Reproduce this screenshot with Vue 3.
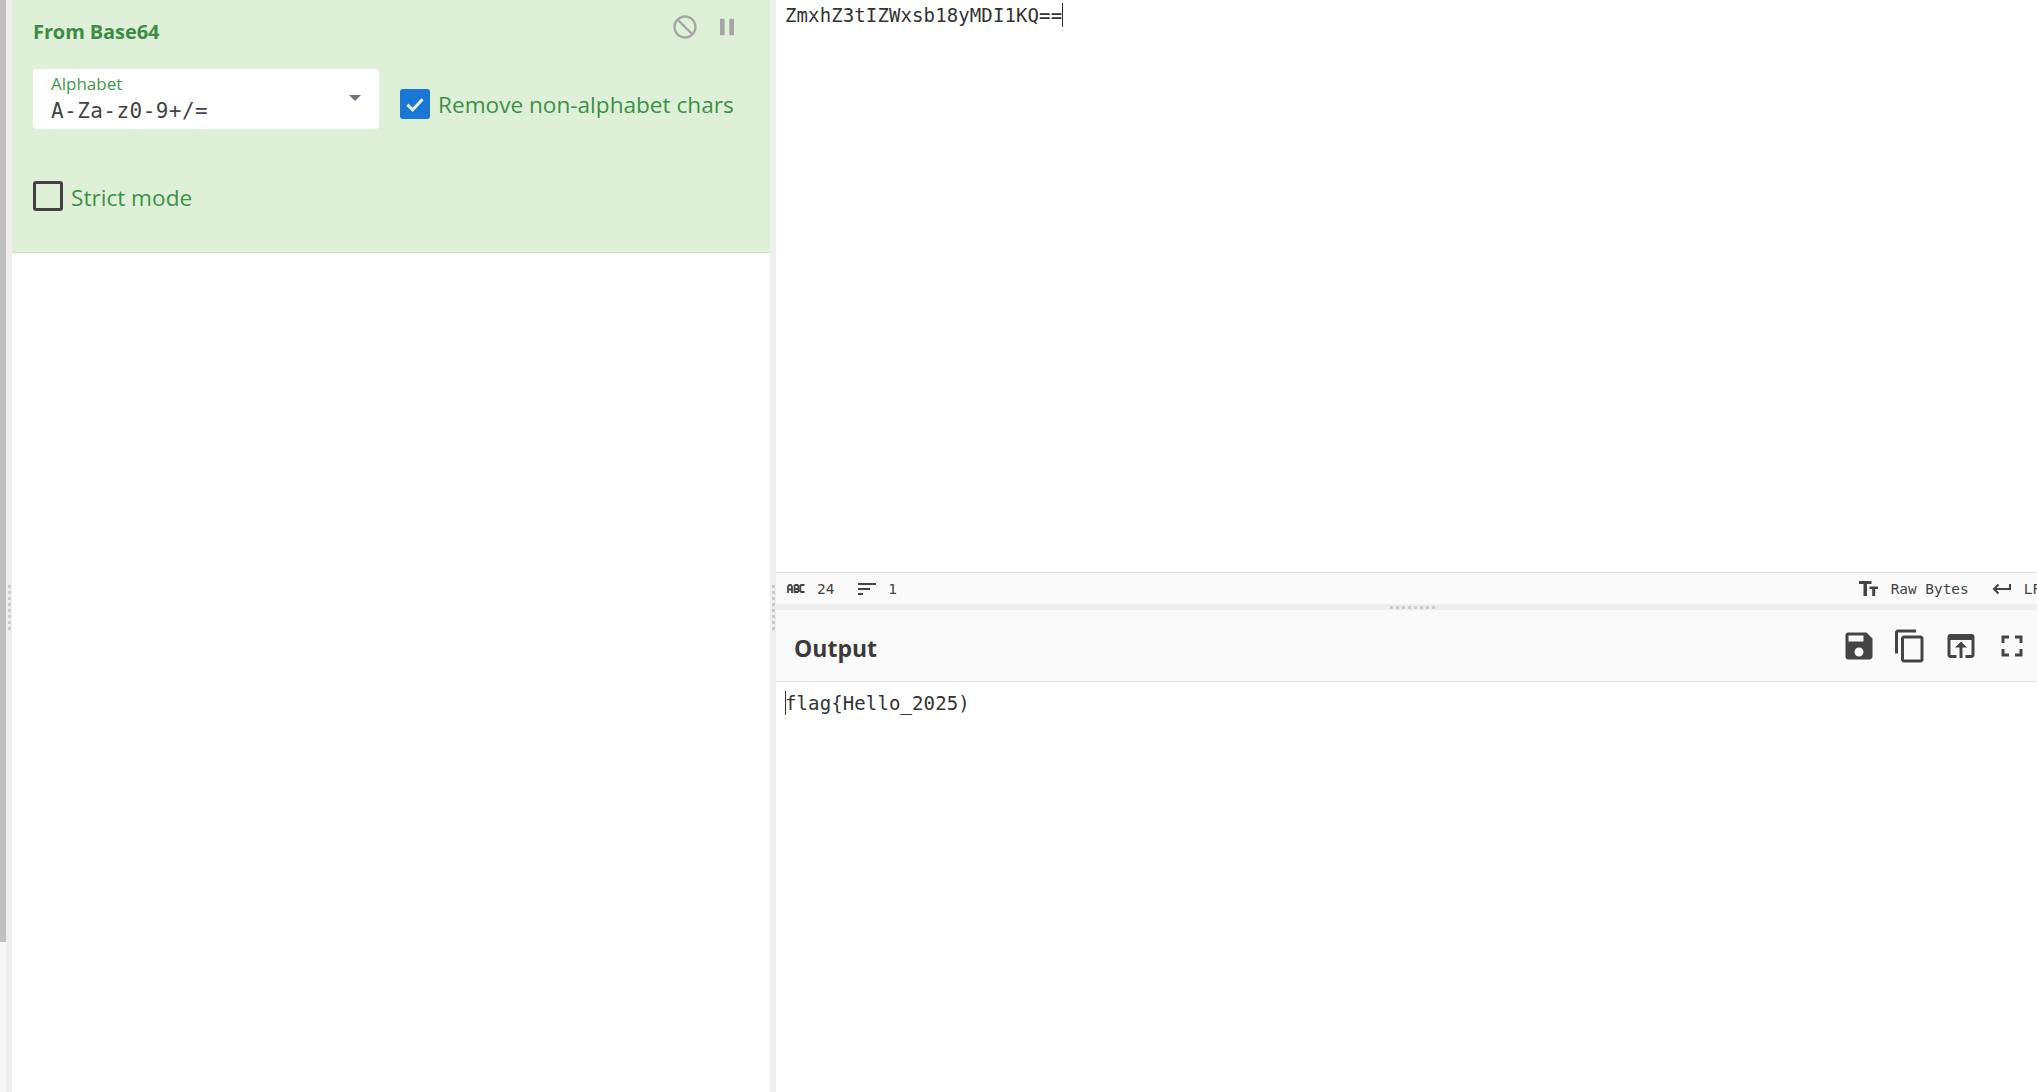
<script setup>
const title = 'From Base64'
</script>

<template>
  <div class="page">
    <div class="scrollbar"><div class="thumb"></div></div>
    <div class="gutter v"><div class="dots col"><i v-for="n in 8" :key="n"></i></div></div>
    <section class="ops">
      <div class="card">
        <div class="head">
          <h3>{{ title }}</h3>
          <div class="head-icons">
            <svg width="28" height="28" viewBox="0 0 24 24"><path fill="#a5a5a5" d="M12 2C6.48 2 2 6.48 2 12s4.480 10 10 10 10-4.480 10-10S17.520 2 12 2zM4 12c0-4.420 3.580-8 8-8 1.850 0 3.550.63 4.900 1.690L5.690 16.900A7.902 7.902 0 0 1 4 12zm8 8c-1.850 0-3.550-.63-4.900-1.690L18.310 7.100A7.902 7.902 0 0 1 20 12c0 4.420-3.580 8-8 8z" transform="scale(-1 1) translate(-24 0)"/></svg>
            <svg width="28" height="28" viewBox="0 0 24 24"><path fill="#a5a5a5" d="M6 19h4V5H6v14zm8-14v14h4V5h-4z"/></svg>
          </div>
        </div>
        <div class="row">
          <div class="select">
            <label>Alphabet</label>
            <div class="val">A-Za-z0-9+/=</div>
            <span class="caret"></span>
          </div>
          <div class="check shift">
            <span class="box on">
              <svg width="28" height="28" viewBox="0 0 24 24"><path fill="none" stroke="#e6f0fa" stroke-width="2.600" d="M5.500 12.500l4.500 4.500 8.500-9"/></svg>
            </span>
            <span class="lbl">Remove non-alphabet chars</span>
          </div>
        </div>
        <div class="check strict">
          <span class="box"></span>
          <span class="lbl low">Strict mode</span>
        </div>
      </div>
    </section>
    <div class="gutter v"><div class="dots col"><i v-for="n in 8" :key="n"></i></div></div>
    <main class="io">
      <div class="input">
        <div class="text">ZmxhZ3tIZWxsb18yMDI1KQ==<span class="cursor"></span></div>
      </div>
      <div class="status">
        <div class="group">
          <svg class="abc" width="18" height="9" viewBox="0 0 18 9"><path fill="none" stroke="#444" stroke-width="1.800" d="M1 9V2.500L2.200 1h1.600L5 2.500V9M1 5.500h4M7.500 1v7h3.200l.8-1V5.800l-.8-.8H7.500M7.500 1h3l.8.8v2.400l-.8.8M17.500 1H14.200l-.9.9v5.200l.9.9h3.300"/></svg>
          <span>24</span>
          <svg class="lines" width="18" height="12" viewBox="0 0 18 12"><path fill="#444" d="M0 0h18v2H0zM0 5h12v2H0zM0 10h5v2H0z"/></svg>
          <span>1</span>
        </div>
        <div class="group right">
          <svg width="19" height="15" viewBox="0 0 19 15"><path fill="#444" d="M0 0h12.500v3H8v12H4.500V3H0zM10.500 5.500H19v2.500h-2.800V15h-3V8h-2.700z"/></svg>
          <span class="raw">Raw Bytes</span>
          <svg class="ret" width="19" height="12" viewBox="0 0 19 12"><path fill="none" stroke="#444" stroke-width="2" d="M18 1v5H2M6.500 1.500L2 6l4.500 4.500"/></svg>
          <span>LF</span>
        </div>
      </div>
      <div class="gutter h"><div class="dots"><i v-for="n in 8" :key="n"></i></div></div>
      <div class="out-head">
        <h2>Output</h2>
        <div class="out-icons">
          <svg width="36" height="36" viewBox="0 0 24 24"><path fill="#444" d="M17 3H5a2 2 0 0 0-2 2v14a2 2 0 0 0 2 2h14c1.100 0 2-.9 2-2V7l-4-4zm-5 16c-1.660 0-3-1.340-3-3s1.340-3 3-3 3 1.340 3 3-1.340 3-3 3zm3-10H5V5h10v4z"/></svg>
          <svg width="36" height="36" viewBox="0 0 24 24"><path fill="#444" d="M16 1H4c-1.100 0-2 .9-2 2v14h2V3h12V1zm3 4H8c-1.100 0-2 .9-2 2v14c0 1.100.9 2 2 2h11c1.100 0 2-.9 2-2V7c0-1.100-.9-2-2-2zm0 16H8V7h11v14z"/></svg>
          <svg width="36" height="36" viewBox="0 0 24 24"><path fill="#444" d="M19 4H5a2 2 0 0 0-2 2v12c0 1.100.9 2 2 2h4v-2H5V8h14v10h-4v2h4c1.100 0 2-.9 2-2V6a2 2 0 0 0-2-2zm-7 5l-4 4h3v7h2v-7h3l-4-4z"/></svg>
          <svg width="36" height="36" viewBox="0 0 24 24"><path fill="#444" d="M7 14H5v5h5v-2H7v-3zm-2-4h2V7h3V5H5v5zm12 7h-3v2h5v-5h-2v3zM14 5v2h3v3h2V5h-5z"/></svg>
        </div>
      </div>
      <div class="output">
        <div class="text"><span class="cursor out"></span>flag{Hello_2025)</div>
      </div>
    </main>
  </div>
</template>

<style scoped>
.page { display: flex; width: 2037px; height: 1092px; overflow: hidden; background: #fff; font-family: "Open Sans", "Noto Sans", sans-serif; color: #333; }
.scrollbar { width: 6px; height: 100%; background: #f8f8f8; flex: none; }
.thumb { height: 942px; background: #c1c1c1; }
.gutter { background: #eee; display: flex; align-items: center; justify-content: center; flex: none; box-sizing: border-box; }
.gutter.v { width: 6px; height: 100%; padding-top: 122px; }
.gutter.h { height: 6px; width: 100%; padding-left: 12px; }
.dots { display: flex; gap: 3px; }
.dots.col { flex-direction: column; }
.dots i { width: 3px; height: 3px; background: #ccc; display: block; }
.ops { width: 758px; flex: none; background: #fff; }
.card { height: 253px; box-sizing: border-box; background: #dff0d8; border-bottom: 1px solid #cfe3bf; padding: 0 21px; color: #3c8a44; }
.head { display: flex; align-items: center; justify-content: space-between; height: 64px; }
h3 { margin: -2px 0 0; font-size: 20px; font-weight: 700; color: #3d8b45; letter-spacing: -.1px; }
.head-icons { display: flex; gap: 14px; margin-right: 8px; margin-top: -10px; }
.row { display: flex; align-items: center; gap: 21px; margin-top: 5px; }
.select { position: relative; width: 346px; height: 60px; box-sizing: border-box; background: #fff; border-radius: 4px; padding: 5px 18px; }
label { display: block; font-size: 17px; line-height: 20px; color: #3f9a4a; }
.val { font-family: "DejaVu Sans Mono", monospace; font-size: 21px; line-height: 26px; color: #444; letter-spacing: .45px; margin-top: 4px; }
.caret { position: absolute; right: 18px; top: 26px; border-left: 6px solid transparent; border-right: 6px solid transparent; border-top: 6px solid #6c757d; }
.check { display: flex; align-items: center; gap: 8px; font-size: 22.600px; color: #3c9146; }
.shift { margin-top: 10px; }
.lbl { height: 30px; line-height: 31px; }
.lbl.low { line-height: 33px; }
.box { width: 30px; height: 30px; box-sizing: border-box; border: 3px solid #424242; border-radius: 3px; display: flex; align-items: center; justify-content: center; flex: none; }
.box.on { background: #1976d2; border: none; }
.strict { margin-top: 52px; }
.io { flex: 1; min-width: 0; display: flex; flex-direction: column; }
.input { height: 573px; flex: none; box-sizing: border-box; border-bottom: 1px solid #e0e0e0; padding-top: 1px; }
.text { font-family: "DejaVu Sans Mono", monospace; font-size: 19px; line-height: 28px; letter-spacing: .11px; padding-left: 9px; color: #333; display: flex; align-items: center; }
.cursor { display: inline-block; width: 1px; height: 24px; background: #333; }
.cursor.out { margin-right: -1px; }
.status { height: 31px; flex: none; background: #fafafa; display: flex; align-items: center; justify-content: space-between; padding-left: 11px; font-family: "DejaVu Sans Mono", monospace; font-size: 14.400px; color: #444; }
.group { display: flex; align-items: center; }
.abc { margin-right: 12px; }
.lines { margin: 0 12px 0 24px; }
.right { margin-right: -4px; }
.raw { margin: 0 23px 0 13px; }
.ret { margin-right: 13px; }
.out-head { height: 72px; flex: none; box-sizing: border-box; background: #fafafa; border-bottom: 1px solid #e0e0e0; display: flex; align-items: center; justify-content: space-between; padding: 0 7px 0 18px; }
h2 { margin: 5px 0 0; font-size: 23px; font-weight: 700; color: #3a3a3a; }
.out-icons { display: flex; gap: 15px; }
.output { padding-top: 7px; }
</style>

<style>
html, body { margin: 0; overflow: hidden; }
</style>
